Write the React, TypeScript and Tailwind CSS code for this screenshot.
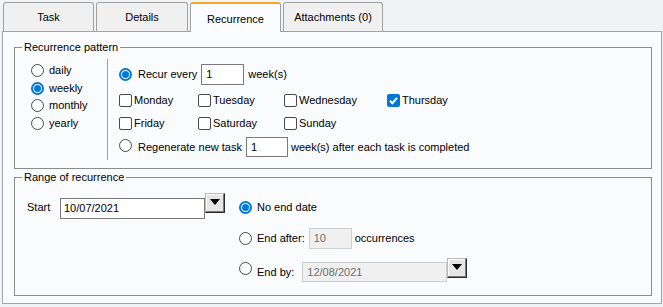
import React from "react";

const Radio = ({ checked = false }: { checked?: boolean }) => (
    checked ? (
        <span className="w-[13px] h-[13px] shrink-0 rounded-full border-2 border-[#0078d7] bg-white flex items-center justify-center">
            <span className="w-[7px] h-[7px] rounded-full bg-[#0078d7]" />
        </span>
    ) : (
        <span className="w-[13px] h-[13px] shrink-0 rounded-full border border-[#4a4a4a] bg-white" />
    )
);

const Check = ({ checked = false }: { checked?: boolean }) => (
    checked ? (
        <span className="w-[13px] h-[13px] shrink-0 rounded-[2px] bg-[#0078d7] flex items-center justify-center">
            <svg width="11" height="11" viewBox="0 0 11 11">
                <path d="M2 5.8 L4.4 8.2 L9 2.8" fill="none" stroke="#fff" strokeWidth="2" />
            </svg>
        </span>
    ) : (
        <span className="w-[13px] h-[13px] shrink-0 rounded-[2px] border border-[#4a4a4a] bg-white" />
    )
);

const DropBtn = () => (
    <span className="w-[20px] h-[20px] shrink-0 flex items-center justify-center bg-[#e6e6e6] border border-t-[#b8b8b8] border-l-[#b8b8b8] border-r-[#2a2a2a] border-b-[#2a2a2a] shadow-[inset_-1px_-1px_0_#7a7a7a,inset_1px_1px_0_#fff]">
        <svg width="10" height="6" viewBox="0 0 10 6" className="-mt-[2px]">
            <path d="M0 0 L10 0 L5 6 Z" fill="#000" />
        </svg>
    </span>
);

const days1 = [
    { label: "Monday", checked: false },
    { label: "Tuesday", checked: false },
    { label: "Wednesday", checked: false },
    { label: "Thursday", checked: true },
];
const days2 = ["Friday", "Saturday", "Sunday"];
const patterns = ["daily", "weekly", "monthly", "yearly"];

const tabs = [
    { label: "Task", w: "w-[91px]", active: false },
    { label: "Details", w: "w-[92px]", active: false },
    { label: "Recurrence", w: "w-[91px]", active: true },
    { label: "Attachments (0)", w: "w-[100px]", active: false },
];

export default function App() {
    return (
        <div className="w-[663px] h-[307px] bg-[#f0f3f6] text-[11px] leading-[13px] text-black [font-family:'Liberation_Sans',Arial,sans-serif] overflow-hidden">
            {/* tab strip */}
            <div className="flex items-start gap-[2px] pl-[3px] pt-[2px]">
                {tabs.map((t) =>
                    t.active ? (
                        <div
                            key={t.label}
                            className={`${t.w} h-[30px] -mb-px relative z-10 bg-[#fbfcfe] border-x border-[#a0a0a0] border-t-2 border-t-[#f5a623] rounded-t-[3px] flex items-center justify-center pt-[2px]`}
                        >
                            {t.label}
                        </div>
                    ) : (
                        <div
                            key={t.label}
                            className={`${t.w} h-[29px] bg-[#f0f0f0] border border-b-0 border-[#a0a0a0] rounded-t-[3px] flex items-center justify-center`}
                        >
                            {t.label}
                        </div>
                    )
                )}
            </div>

            {/* panel */}
            <div className="ml-[2px] w-[660px] h-[273px] border border-[#a0a4a8] bg-[#fafbfd] pl-[11px] pr-[9px] pt-[9px]">
                <fieldset className="border border-[#8c8c8c]">
                    <legend className="ml-[7px] px-[2px] leading-[13px]">Recurrence pattern</legend>
                    <div className="flex h-[114px] pt-[5px] pb-[8px]">
                        <div className="w-[92px] pl-[16px] pt-[3px]">
                            {patterns.map((p) => (
                                <div key={p} className="h-[17.5px] flex items-center gap-[5px]">
                                    <Radio checked={p === "weekly"} />
                                    <span>{p}</span>
                                </div>
                            ))}
                        </div>
                        <div className="border-l border-[#a0a0a0]" />
                        <div className="pl-[11px] pt-[5px]">
                            <div className="h-[21px] flex items-center">
                                <Radio checked />
                                <span className="ml-[6px]">Recur every</span>
                                <span className="ml-[4px] w-[43px] h-[21px] border border-[#7a7a7a] bg-white pl-[4px] flex items-center">1</span>
                                <span className="ml-[4px]">week(s)</span>
                            </div>
                            <div className="mt-[7px] h-[16px] grid grid-cols-[79px_86px_103px_auto] items-center">
                                {days1.map((d) => (
                                    <div key={d.label} className="flex items-center gap-[2px]">
                                        <Check checked={d.checked} />
                                        <span>{d.label}</span>
                                    </div>
                                ))}
                            </div>
                            <div className="mt-[7px] h-[16px] grid grid-cols-[79px_86px_103px_auto] items-center">
                                {days2.map((d) => (
                                    <div key={d} className="flex items-center gap-[2px]">
                                        <Check />
                                        <span>{d}</span>
                                    </div>
                                ))}
                            </div>
                            <div className="mt-[6px] h-[20px] flex items-center">
                                <span className="flex -mt-[3px]">
                                    <Radio />
                                </span>
                                <span className="ml-[6px]">Regenerate new task</span>
                                <span className="ml-[4px] w-[42px] h-[20px] border border-[#7a7a7a] bg-white pl-[4px] flex items-center">1</span>
                                <span className="ml-[3px]">week(s) after each task is completed</span>
                            </div>
                        </div>
                    </div>
                </fieldset>

                <fieldset className="mt-[2px] border border-[#8c8c8c]">
                    <legend className="ml-[7px] px-[2px] leading-[13px]">Range of recurrence</legend>
                    <div className="flex items-start pl-[12px] pt-[9px] pb-[13px]">
                        <div className="flex items-start">
                            <span className="w-[33px] mt-[8px]">Start</span>
                            <span className="mt-[5px] w-[145px] h-[21px] border border-[#7a7a7a] bg-white pl-[3px] flex items-center">10/07/2021</span>
                            <DropBtn />
                        </div>
                        <div className="ml-[14px] mt-[4px]">
                            <div className="h-[20px] flex items-center">
                                <Radio checked />
                                <span className="ml-[5px]">No end date</span>
                            </div>
                            <div className="mt-[11px] h-[21px] flex items-center">
                                <Radio />
                                <span className="ml-[5px]">End after:</span>
                                <span className="ml-[4px] w-[43px] h-[21px] border border-[#cfcfcf] bg-[#f0f0f0] text-[#6d6d6d] pl-[4px] flex items-center">10</span>
                                <span className="ml-[3px]">occurrences</span>
                            </div>
                            <div className="mt-[13px] flex items-start">
                                <span className="h-[20px] flex items-center -mt-[4px]">
                                    <Radio />
                                </span>
                                <span className="ml-[5px] h-[20px] flex items-center">End by:</span>
                                <span className="ml-[8px] w-[145px] h-[20px] border border-[#cfcfcf] bg-[#f0f0f0] text-[#6d6d6d] pl-[4px] flex items-center">12/08/2021</span>
                                <span className="flex -mt-[4px]">
                                    <DropBtn />
                                </span>
                            </div>
                        </div>
                    </div>
                </fieldset>
            </div>
        </div>
    );
}
